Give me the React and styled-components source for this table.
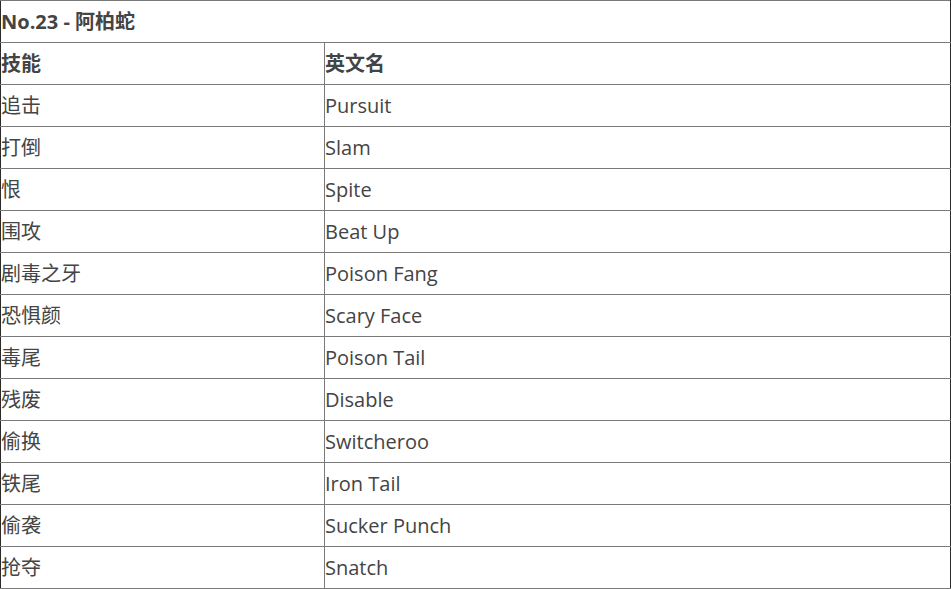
import React from 'react';
import styled, { createGlobalStyle } from 'styled-components';

const GlobalStyle = createGlobalStyle`
  html, body {
    margin: 0;
    padding: 0;
    background: #ffffff;
  }
`;

const Table = styled.table`
  width: 951px;
  border-collapse: collapse;
  table-layout: fixed;
  font-family: "Open Sans", "Noto Sans CJK SC", sans-serif;
  font-size: 20px;
  color: #444444;
  border-left: 1px solid #2a2a2a;
  border-right: 1px solid #2a2a2a;
`;

const Row = styled.tr`
  height: 42px;
`;

const Cell = styled.td`
  border: 1px solid #7a7a7a;
  border-left: ${props => (props.$first ? '1px solid #2a2a2a' : '1px solid #7a7a7a')};
  border-right: ${props => (props.$last ? '1px solid #2a2a2a' : '1px solid #7a7a7a')};
  padding: 1px 0 0;
  height: 40px;
  box-sizing: border-box;
  font-weight: ${props => (props.$bold ? 700 : 400)};
  vertical-align: middle;
  white-space: nowrap;
  line-height: 40px;
`;

const moves = [
  ['追击', 'Pursuit'],
  ['打倒', 'Slam'],
  ['恨', 'Spite'],
  ['围攻', 'Beat Up'],
  ['剧毒之牙', 'Poison Fang'],
  ['恐惧颜', 'Scary Face'],
  ['毒尾', 'Poison Tail'],
  ['残废', 'Disable'],
  ['偷换', 'Switcheroo'],
  ['铁尾', 'Iron Tail'],
  ['偷袭', 'Sucker Punch'],
  ['抢夺', 'Snatch'],
];

const App = () => (
  <>
    <GlobalStyle />
    <Table>
      <colgroup>
        <col style={{ width: 324 }} />
        <col />
      </colgroup>
      <tbody>
        <Row>
          <Cell colSpan={2} $bold $first $last>No.23 - 阿柏蛇</Cell>
        </Row>
        <Row>
          <Cell $bold $first>技能</Cell>
          <Cell $bold $last>英文名</Cell>
        </Row>
        {moves.map(([zh, en]) => (
          <Row key={en}>
            <Cell $first>{zh}</Cell>
            <Cell $last>{en}</Cell>
          </Row>
        ))}
      </tbody>
    </Table>
  </>
);

export default App;
